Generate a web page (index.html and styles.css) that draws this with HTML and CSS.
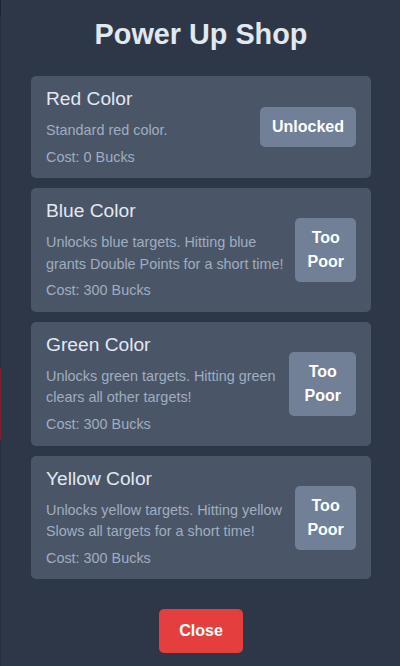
FILE: index.html
```html
<!DOCTYPE html>
<html lang="en">
<head>
  <meta charset="UTF-8">
  <meta name="viewport" content="width=device-width, initial-scale=1.0">
  <title>Power Up Shop</title>
  <link rel="stylesheet" href="styles.css">
</head>
<body>
    <div class="game-edge"></div>
    <div class="shop-modal">
      <h2>Power Up Shop</h2>
      <div class="shop-items">
        <div class="shop-item">
          <div class="item-info">
            <h3>Red Color</h3>
            <p class="item-desc">Standard red color.</p>
            <p class="item-cost">Cost: 0 Bucks</p>
          </div>
          <button class="item-btn">Unlocked</button>
        </div>
        <div class="shop-item">
          <div class="item-info">
            <h3>Blue Color</h3>
            <p class="item-desc">Unlocks blue targets. Hitting blue grants Double Points for a short time!</p>
            <p class="item-cost">Cost: 300 Bucks</p>
          </div>
          <button class="item-btn">Too Poor</button>
        </div>
        <div class="shop-item">
          <div class="item-info">
            <h3>Green Color</h3>
            <p class="item-desc">Unlocks green targets. Hitting green clears all other targets!</p>
            <p class="item-cost">Cost: 300 Bucks</p>
          </div>
          <button class="item-btn">Too Poor</button>
        </div>
        <div class="shop-item">
          <div class="item-info">
            <h3>Yellow Color</h3>
            <p class="item-desc">Unlocks yellow targets. Hitting yellow Slows all targets for a short time!</p>
            <p class="item-cost">Cost: 300 Bucks</p>
          </div>
          <button class="item-btn">Too Poor</button>
        </div>
      </div>
      <button class="close-btn">Close</button>
    </div>
</body>
</html>
```

FILE: styles.css
```css
body {
  margin: 0;
  font-family: "Liberation Sans", Arial, sans-serif;
  line-height: 1.5;
  display: flex;
  height: 100vh;
  overflow: hidden;
  background-color: #2a3140;
}
/* the game board peeking out behind the modal */
.game-edge {
  flex: 0 0 1px;
  background: linear-gradient(to bottom, #1f2530 0 17px, #29303d 17px 368px, #7e2030 368px 440px, #29303d 440px);
}
.shop-modal {
  flex: 0 0 400px;
  box-sizing: border-box;
  padding: 13px 30px;
  background-color: #2d3748;
  color: #e2e8f0;
  text-align: center;
}
.shop-modal h2 {
  margin: 0 0 20px;
  font-size: 1.8em;
}
.shop-items {
  display: flex;
  flex-direction: column;
  gap: 10px;
  text-align: left;
}
.shop-item {
  display: flex;
  align-items: center;
  gap: 10px;
  padding: 10px 15px;
  background-color: #4a5568;
  border-radius: 5px;
}
.item-info {
  flex: 1 1 auto;
}
.item-info h3 {
  margin: 0 0 7px;
  font-size: 1.2em;
  font-weight: normal;
  line-height: 1.4;
}
.item-desc,
.item-cost {
  margin: 0;
  font-size: 0.9em;
  color: #a0aec0;
}
.item-desc {
  margin-bottom: 5px;
}
.item-btn {
  padding: 8px 12px;
  border: none;
  border-radius: 5px;
  background-color: #718096;
  color: #fff;
  font-family: inherit;
  font-size: 16px;
  font-weight: bold;
  line-height: 1.5;
}
.close-btn {
  margin-top: 30px;
  padding: 10px 20px;
  border: none;
  border-radius: 5px;
  background-color: #e53e3e;
  color: #fff;
  font-family: inherit;
  font-size: 16px;
  font-weight: bold;
  line-height: 1.5;
}
```
